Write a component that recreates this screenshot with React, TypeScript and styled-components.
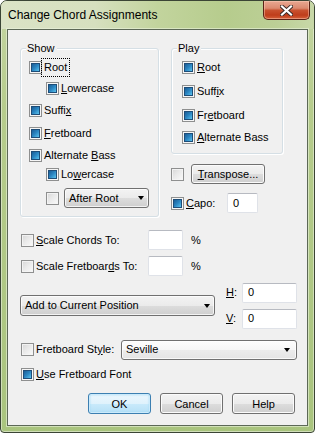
import React from 'react';
import styled, { createGlobalStyle, css } from 'styled-components';

const Global = createGlobalStyle`
  html, body { margin: 0; padding: 0; background: #ffffff; }
  body { font-family: "Liberation Sans", Arial, sans-serif; }
  * { box-sizing: border-box; }
`;

const Window = styled.div`
  width: 315px;
  height: 433px;
  border: 1px solid #3b4535;
  border-radius: 7px 7px 4px 4px;
  background: linear-gradient(to bottom, #c5d6a3 0%, #b6cc8c 25%, #a9c47e 100%);
  box-shadow: inset 0 0 0 1px rgba(255, 255, 255, 0.45);
  display: flex;
  flex-direction: column;
  overflow: hidden;
`;

const TitleBar = styled.div`
  height: 28px;
  flex: none;
  display: flex;
  align-items: flex-start;
  padding: 0 4px 0 7px;
  background: linear-gradient(to right, #dbe3c6 0%, #d6e0bf 30%, #c2d49d 50%, #b6cc8d 72%, #bccf96 88%, #c8d8a8 100%);
`;

const Title = styled.div`
  flex: 1;
  margin-top: 7px;
  font-size: 12px;
  line-height: 14px;
  color: #000;
  white-space: nowrap;
`;

const CloseBtn = styled.div`
  width: 47px;
  height: 19px;
  flex: none;
  border: 1px solid #5a2216;
  border-top: none;
  border-radius: 0 0 5px 5px;
  background: linear-gradient(to bottom, #e9a892 0%, #dc8a70 40%, #c8512f 52%, #bf3d1b 78%, #d5603a 100%);
  box-shadow: inset 0 0 0 1px rgba(255, 210, 190, 0.45);
  display: flex;
  align-items: center;
  justify-content: center;
`;

const Client = styled.div`
  flex: 1;
  margin: 0 6px 6px 6px;
  background: #f0f0f0;
  border: 1px solid #5c6856;
  box-shadow: 0 0 0 1px rgba(235, 243, 222, 0.6);
  display: flex;
  flex-direction: column;
  padding: 18px 0 0 12px;
  font-size: 11px;
  color: #000;
`;

const TopSection = styled.div`
  display: flex;
  align-items: flex-start;
  gap: 12px;
  flex: none;
`;

const Group = styled.div<{ $w: number; $h: number; $pl: number }>`
  position: relative;
  width: ${p => p.$w}px;
  height: ${p => p.$h}px;
  flex: none;
  border: 1px solid #d5dfe5;
  border-radius: 3px;
  box-shadow: inset 1px 1px 0 #ffffff, 1px 1px 0 #ffffff;
  display: flex;
  flex-direction: column;
  padding-left: ${p => p.$pl}px;
`;

const Legend = styled.span`
  position: absolute;
  top: -7px;
  left: 5px;
  padding: 0 2px 0 1px;
  background: #f0f0f0;
  line-height: 13px;
`;

const RightColumn = styled.div`
  display: flex;
  flex-direction: column;
`;

const CheckRow = styled.div<{ $mt?: number; $ml?: number; $h?: number }>`
  display: flex;
  align-items: center;
  flex: none;
  height: ${p => p.$h ?? 13}px;
  margin-top: ${p => p.$mt ?? 0}px;
  margin-left: ${p => p.$ml ?? 0}px;
`;

const Box = styled.span<{ $on?: boolean }>`
  width: 13px;
  height: 13px;
  flex: none;
  border: 1px solid #8e8f8f;
  padding: 1px;
  display: flex;
  background: ${p =>
    p.$on ? '#f6f6f6' : 'linear-gradient(135deg, #d6d6d6 0%, #e9e9e9 45%, #fafafa 100%)'};
  box-shadow: inset 0 0 0 1px ${p => (p.$on ? '#f6f6f6' : 'rgba(244,244,244,0.9)')};
  ${p =>
    p.$on &&
    css`
      &::after {
        content: '';
        flex: 1;
        border: 1px solid #1e4d78;
        background: linear-gradient(135deg, #1a5d96 0%, #2b86c2 50%, #5ac3ee 100%);
      }
    `}
`;

const Text = styled.span<{ $w?: number; $focus?: boolean }>`
  margin-left: 2px;
  line-height: 13px;
  white-space: nowrap;
  ${p => (p.$w ? `width: ${p.$w}px; flex: none;` : '')}
  ${p =>
    p.$focus &&
    css`
      outline: 1px dotted #000;
      outline-offset: 2px;
    `}
`;

const U = styled.u`
  text-decoration: underline;
  text-underline-offset: 1px;
`;

const Combo = styled.div<{ $w: number; $h: number; $light?: boolean; $ml?: number; $ar?: number }>`
  width: ${p => p.$w}px;
  height: ${p => p.$h}px;
  flex: none;
  margin-left: ${p => p.$ml ?? 0}px;
  border: 1px solid #707070;
  border-radius: 3px;
  display: flex;
  align-items: center;
  padding-left: 4px;
  padding-right: ${p => p.$ar ?? 4}px;
  background: ${p =>
    p.$light
      ? 'linear-gradient(to bottom, #fdfdfd 0%, #f6f6f6 50%, #ececec 51%, #e4e4e4 100%)'
      : 'linear-gradient(to bottom, #f3f3f3 0%, #ebebeb 50%, #dddddd 51%, #cfcfcf 100%)'};
  box-shadow: inset 0 0 0 1px rgba(255, 255, 255, 0.75);
`;

const ComboText = styled.span`
  flex: 1;
  line-height: 13px;
  white-space: nowrap;
`;

const Arrow = styled.span`
  width: 0;
  height: 0;
  flex: none;
  border-left: 3.5px solid transparent;
  border-right: 3.5px solid transparent;
  border-top: 4px solid #000;
`;

const Button = styled.button<{ $w: number; $h: number; $def?: boolean; $ml?: number }>`
  width: ${p => p.$w}px;
  height: ${p => p.$h}px;
  flex: none;
  margin-left: ${p => p.$ml ?? 0}px;
  padding: 0;
  font-family: "Liberation Sans", Arial, sans-serif;
  font-size: 11px;
  color: #000;
  border: 1px solid #707070;
  border-radius: 3px;
  background: linear-gradient(to bottom, #f3f3f3 0%, #ebebeb 50%, #dddddd 51%, #cfcfcf 100%);
  box-shadow: inset 0 0 0 1px #fbfbfb;
  ${p =>
    p.$def &&
    css`
      border-color: #3c7fb1;
      background: linear-gradient(to bottom, #ecf7fd 0%, #dff2fc 50%, #c9eafb 51%, #b6e0f6 100%);
      box-shadow: inset 0 0 0 1px #cbeafb, inset 0 0 2px 1px #9fd8f4;
    `}
`;

const Field = styled.div<{ $w: number; $h: number }>`
  width: ${p => p.$w}px;
  height: ${p => p.$h}px;
  flex: none;
  background: #ffffff;
  border: 1px solid #dfe2e8;
  border-top-color: #b7bac1;
  border-radius: 2px;
  padding-left: 5px;
  display: flex;
  align-items: center;
  line-height: 13px;
`;

const Suffix = styled.span`
  margin-left: 8px;
  line-height: 13px;
`;

const PositionRow = styled.div`
  display: flex;
  align-items: center;
  height: 47px;
  margin-top: 6px;
  flex: none;
`;

const HVColumn = styled.div`
  display: flex;
  flex-direction: column;
  gap: 6px;
  margin-left: 11px;
`;

const HVRow = styled.div`
  display: flex;
  align-items: center;
  height: 20px;
`;

const HVLabel = styled.span`
  width: 16px;
  flex: none;
  line-height: 13px;
`;

const ButtonRow = styled.div`
  display: flex;
  justify-content: flex-end;
  gap: 9px;
  margin-top: 12px;
  padding-right: 12px;
  flex: none;
`;

function Check({
  on,
  children,
  mt,
  ml,
  focus,
}: {
  on?: boolean;
  children: React.ReactNode;
  mt?: number;
  ml?: number;
  focus?: boolean;
}) {
  return (
    <CheckRow $mt={mt} $ml={ml}>
      <Box $on={on} />
      <Text $focus={focus}>{children}</Text>
    </CheckRow>
  );
}

export default function App() {
  return (
    <>
      <Global />
      <Window>
        <TitleBar>
          <Title>Change Chord Assignments</Title>
          <CloseBtn>
            <svg width="13" height="11" viewBox="0 0 13 11">
              <path d="M2 1.5 L11 9.5 M11 1.5 L2 9.5" stroke="#3a2a26" strokeWidth="4" strokeLinecap="square" />
              <path d="M2 1.5 L11 9.5 M11 1.5 L2 9.5" stroke="#ffffff" strokeWidth="2.2" strokeLinecap="square" />
            </svg>
          </CloseBtn>
        </TitleBar>
        <Client>
          <TopSection>
            <Group $w={139} $h={169} $pl={8}>
              <Legend>Show</Legend>
              <Check on mt={12} focus>
                Root
              </Check>
              <Check on mt={8} ml={17}>
                <U>L</U>owercase
              </Check>
              <Check on mt={9}>
                Suffi<U>x</U>
              </Check>
              <Check on mt={10}>
                <U>F</U>retboard
              </Check>
              <Check on mt={9}>
                Alternate <U>B</U>ass
              </Check>
              <Check on mt={6} ml={17}>
                Lo<U>w</U>ercase
              </Check>
              <CheckRow $mt={7} $ml={17} $h={20}>
                <Box />
                <Combo $w={85} $h={20} $ml={5}>
                  <ComboText>After Root</ComboText>
                  <Arrow />
                </Combo>
              </CheckRow>
            </Group>
            <RightColumn>
              <Group $w={112} $h={106} $pl={10}>
                <Legend>Play</Legend>
                <Check on mt={12}>
                  <U>R</U>oot
                </Check>
                <Check on mt={11}>
                  Suff<U>i</U>x
                </Check>
                <Check on mt={11}>
                  Fr<U>e</U>tboard
                </Check>
                <Check on mt={9}>
                  <U>A</U>lternate Bass
                </Check>
              </Group>
              <CheckRow $mt={10} $h={20}>
                <Box />
                <Button $w={74} $h={20} $ml={7}>
                  <U>T</U>ranspose...
                </Button>
              </CheckRow>
              <CheckRow $mt={9} $h={20}>
                <Box $on />
                <Text $w={41}>
                  <U>C</U>apo:
                </Text>
                <Field $w={31} $h={20}>0</Field>
              </CheckRow>
            </RightColumn>
          </TopSection>

          <CheckRow $mt={13} $ml={1} $h={20}>
            <Box />
            <Text $w={112}>
              <U>S</U>cale Chords To:
            </Text>
            <Field $w={35} $h={20} />
            <Suffix>%</Suffix>
          </CheckRow>
          <CheckRow $mt={6} $ml={1} $h={20}>
            <Box />
            <Text $w={112}>
              Scale Fretboar<U>d</U>s To:
            </Text>
            <Field $w={35} $h={20} />
            <Suffix>%</Suffix>
          </CheckRow>

          <PositionRow>
            <Combo $w={195} $h={21}>
              <ComboText>Add to Current Position</ComboText>
              <Arrow />
            </Combo>
            <HVColumn>
              <HVRow>
                <HVLabel>
                  <U>H</U>:
                </HVLabel>
                <Field $w={55} $h={20}>0</Field>
              </HVRow>
              <HVRow>
                <HVLabel>
                  <U>V</U>:
                </HVLabel>
                <Field $w={55} $h={20}>0</Field>
              </HVRow>
            </HVColumn>
          </PositionRow>

          <CheckRow $mt={10} $ml={1} $h={21}>
            <Box />
            <Text $w={85}>
              Fretboard St<U>y</U>le:
            </Text>
            <Combo $w={176} $h={20} $light $ar={6}>
              <ComboText>Seville</ComboText>
              <Arrow />
            </Combo>
          </CheckRow>
          <Check on mt={8} ml={1}>
            <U>U</U>se Fretboard Font
          </Check>

          <ButtonRow>
            <Button $w={63} $h={21} $def>
              OK
            </Button>
            <Button $w={63} $h={21}>
              Cancel
            </Button>
            <Button $w={63} $h={21}>
              Help
            </Button>
          </ButtonRow>
        </Client>
      </Window>
    </>
  );
}
